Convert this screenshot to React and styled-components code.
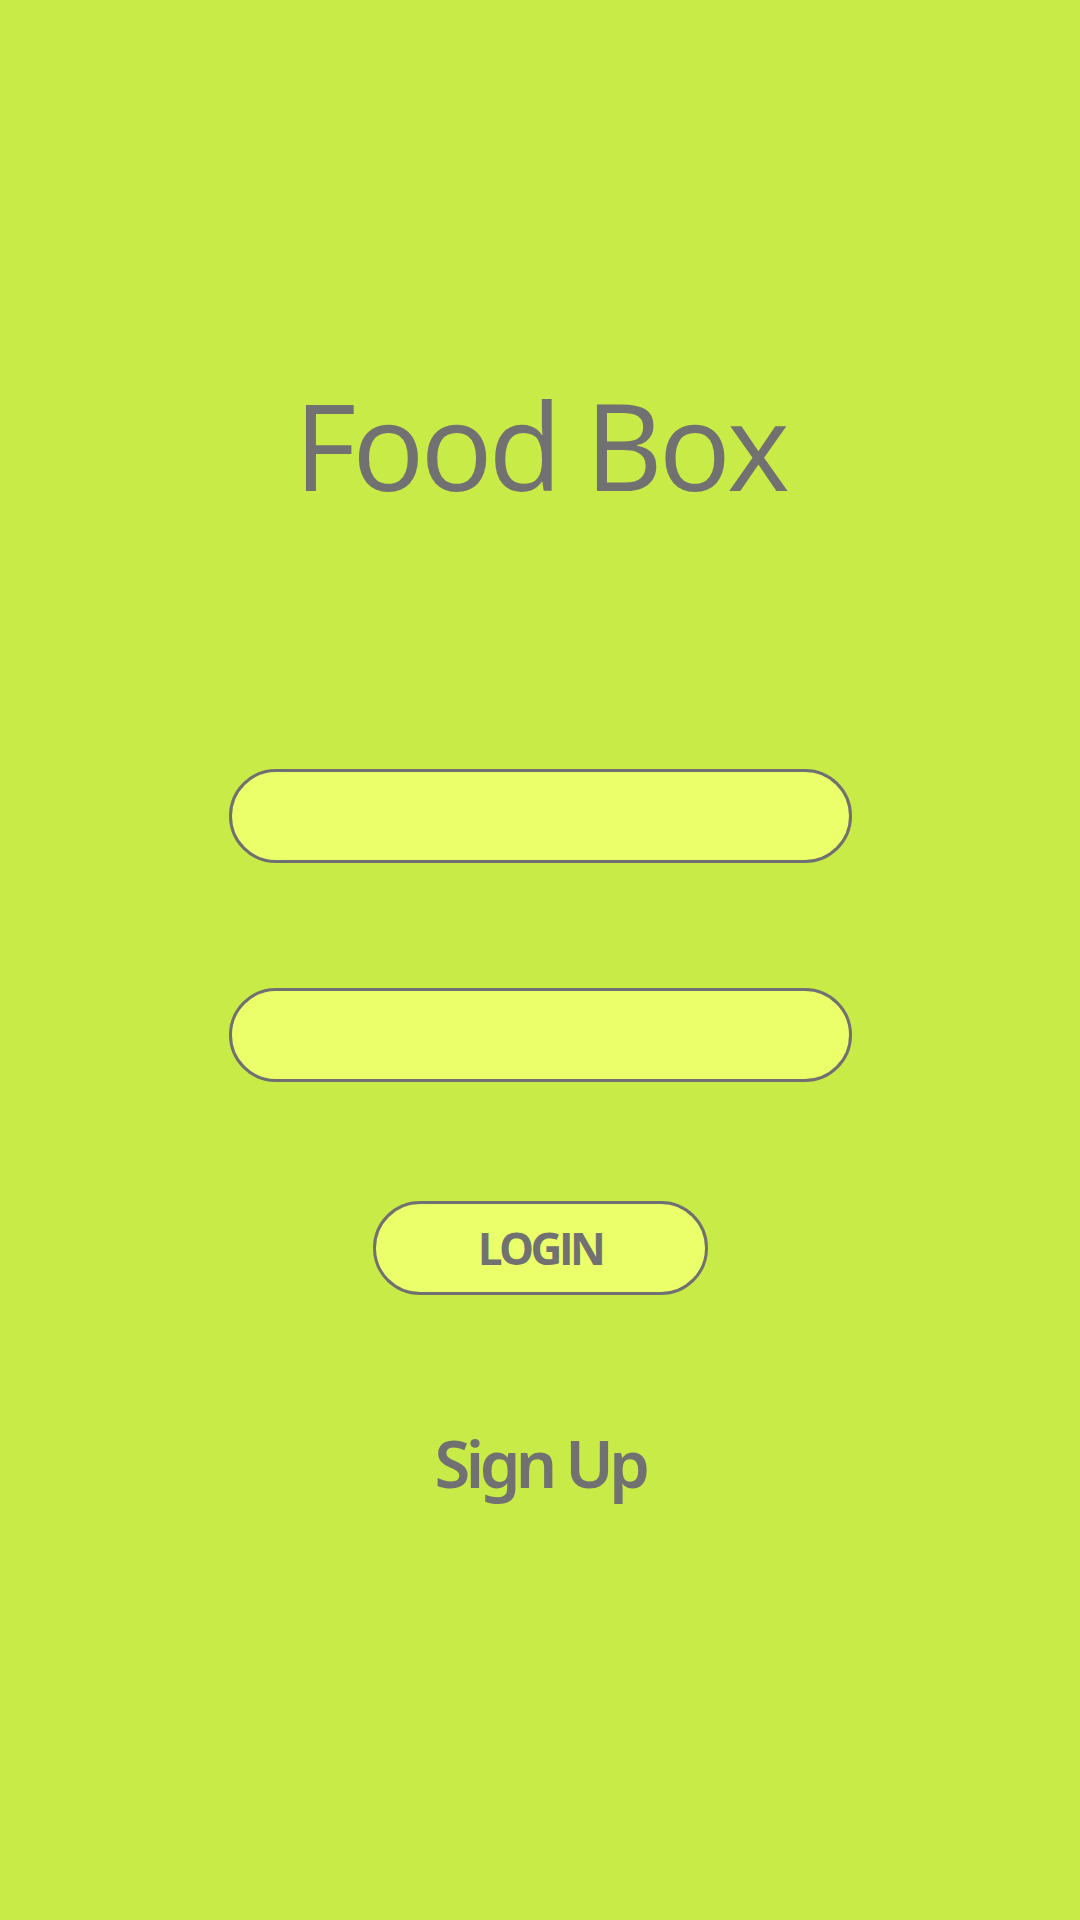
import React from 'react';
import styled, { createGlobalStyle } from 'styled-components';

const Global = createGlobalStyle`
  html, body {
    margin: 0;
    padding: 0;
    background: #c8eb48;
  }
  * {
    box-sizing: border-box;
  }
`;

const S = {
  Page: styled.main`
    min-height: 1920px;
    background: #c8eb48;
    display: flex;
    flex-direction: column;
    align-items: center;
    padding-top: 385px;
    font-family: 'Open Sans', 'Noto Sans', sans-serif;
    color: #717171;
  `,
  Title: styled.h1`
    margin: 0;
    font-size: 120px;
    font-weight: 400;
    line-height: 1;
    letter-spacing: -4px;
  `,
  Form: styled.form`
    display: flex;
    flex-direction: column;
    align-items: center;
    gap: 125px;
    margin-top: 264px;
  `,
  Field: styled.input`
    width: 623px;
    height: 94px;
    border: 3px solid #707070;
    border-radius: 47px;
    background: #ebff6b;
    padding: 0 40px;
    font: inherit;
    font-size: 36px;
    color: #717171;
    outline: none;
  `,
  Button: styled.button`
    width: 335px;
    height: 94px;
    margin-top: -6px;
    border: 3px solid #707070;
    border-radius: 47px;
    background: #ebff6b;
    font-family: 'Open Sans', 'Noto Sans', sans-serif;
    font-size: 44px;
    font-weight: 700;
    letter-spacing: -3.5px;
    color: #717171;
    cursor: pointer;
  `,
  SignUp: styled.a`
    margin-top: 136px;
    font-family: 'Noto Sans', 'Open Sans', sans-serif;
    font-size: 65px;
    font-weight: 600;
    line-height: 1;
    letter-spacing: -4.5px;
    color: #717171;
    text-decoration: none;
  `,
};

const App = () => {
  return (
    <S.Page>
      <Global />
      <S.Title>Food Box</S.Title>
      <S.Form onSubmit={e => e.preventDefault()}>
        <S.Field type="text" />
        <S.Field type="password" />
        <S.Button type="submit">LOGIN</S.Button>
      </S.Form>
      <S.SignUp href="#">Sign Up</S.SignUp>
    </S.Page>
  );
};

export default App;
